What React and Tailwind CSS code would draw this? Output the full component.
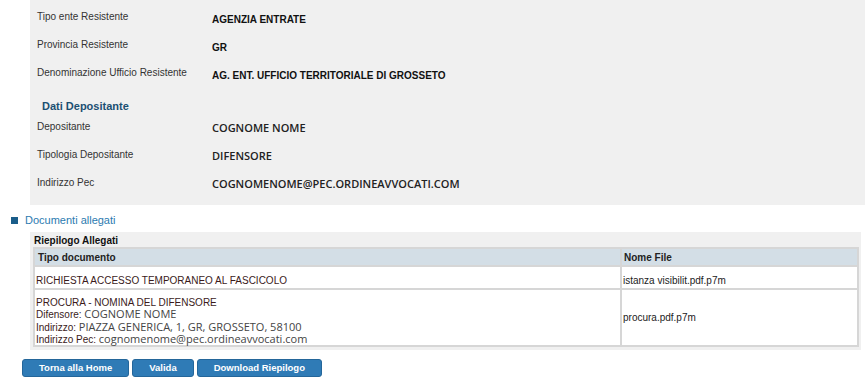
const resistente = [
  { label: 'Tipo ente Resistente', value: 'AGENZIA ENTRATE' },
  { label: 'Provincia Resistente', value: 'GR' },
  { label: 'Denominazione Ufficio Resistente', value: 'AG. ENT. UFFICIO TERRITORIALE DI GROSSETO' },
];

const depositante = [
  { label: 'Depositante', value: 'COGNOME NOME' },
  { label: 'Tipologia Depositante', value: 'DIFENSORE' },
  { label: 'Indirizzo Pec', value: 'COGNOMENOME@PEC.ORDINEAVVOCATI.COM' },
];

const arial = { fontFamily: '"Liberation Sans", Arial, sans-serif' };

const Row = ({ label, value, openSans }) => (
  <div className="flex items-start h-[28px]">
    <div className="w-[175px] text-[10px] text-[#333] leading-[12px]">{label}</div>
    <div
      className={
        openSans
          ? "font-['Open_Sans',sans-serif] text-[11px] font-semibold text-[#222] leading-[12px] mt-[1px]"
          : 'text-[10px] font-bold text-[#111] leading-[12px] mt-[3px]'
      }
    >
      {value}
    </div>
  </div>
);

const App = () => {
  return (
    <div className="w-[865px] h-[389px] bg-white overflow-hidden" style={arial}>
      {/* dati ricorso */}
      <section className="ml-[30px] h-[205px] bg-[#f0f0f0] pl-[7px] pt-[11px]">
        {resistente.map((r) => (
          <Row key={r.label} {...r} />
        ))}
        <h3 className="ml-[5px] mt-[4px] mb-[8px] text-[11px] leading-[14px] font-bold text-[#1b4f72]">Dati Depositante</h3>
        {depositante.map((r) => (
          <Row key={r.label} {...r} openSans />
        ))}
      </section>

      {/* documenti */}
      <div className="flex items-center gap-[7px] ml-[11px] mt-[8px]">
        <span className="w-[7px] h-[7px] bg-[#1a5d8a]" />
        <span className="text-[11px] leading-[14px] text-[#2b7bb0]">Documenti allegati</span>
      </div>

      <div className="ml-[30px] mr-[4px] mt-[5px] bg-[#f0f0f0] px-[3px] pb-[3px]">
        <div className="text-[10px] font-bold text-[#111] pl-[1px] pt-[3px] leading-[12px]">Riepilogo Allegati</div>
        <table className="w-[826px] border-collapse text-[10px]">
          <thead>
            <tr className="bg-[#d3dee6]">
              <th className="text-left font-bold text-[#222] px-[3px] h-[18px] border-2 border-[#d6d6d6] w-[587px]">Tipo documento</th>
              <th className="text-left font-bold text-[#222] px-[2px] border-2 border-[#d6d6d6]">Nome File</th>
            </tr>
          </thead>
          <tbody className="bg-white">
            <tr>
              <td className="px-[1px] h-[22px] border-2 border-[#d6d6d6] text-[#3a1a1a] pt-[6px]">RICHIESTA ACCESSO TEMPORANEO AL FASCICOLO</td>
              <td className="px-[1px] border-2 border-[#d6d6d6] text-[#222] pt-[6px]">istanza visibilit.pdf.p7m</td>
            </tr>
            <tr>
              <td className="px-[1px] pt-[7px] pb-[0px] border-2 border-[#d6d6d6] leading-[11.3px]">
                <div className="text-[#3a1a1a]">PROCURA - NOMINA DEL DIFENSORE</div>
                <div>
                  <span className="text-[10px] text-[#3a1a1a]">Difensore: </span>
                  <span className="font-['Open_Sans',sans-serif] text-[11px] text-[#444]">COGNOME NOME</span>
                </div>
                <div>
                  <span className="text-[10px] text-[#3a1a1a]">Indirizzo: </span>
                  <span className="font-['Open_Sans',sans-serif] text-[11px] text-[#444]">PIAZZA GENERICA, 1, GR, GROSSETO, 58100</span>
                </div>
                <div>
                  <span className="text-[10px] text-[#3a1a1a]">Indirizzo Pec: </span>
                  <span className="font-['Open_Sans',sans-serif] text-[11px] text-[#444]">cognomenome@pec.ordineavvocati.com</span>
                </div>
              </td>
              <td className="px-[1px] border-2 border-[#d6d6d6] text-[#222]">procura.pdf.p7m</td>
            </tr>
          </tbody>
        </table>
      </div>

      {/* azioni */}
      <div className="flex gap-[3px] ml-[22px] mt-[9px]">
        {['Torna alla Home', 'Valida', 'Download Riepilogo'].map((b) => (
          <button
            key={b}
            className="h-[18px] px-[16px] rounded-[3px] bg-[#2f7bb6] border border-[#24669a] text-white text-[9.5px] font-bold leading-none"
          >
            {b}
          </button>
        ))}
      </div>
    </div>
  );
};

export default App;
